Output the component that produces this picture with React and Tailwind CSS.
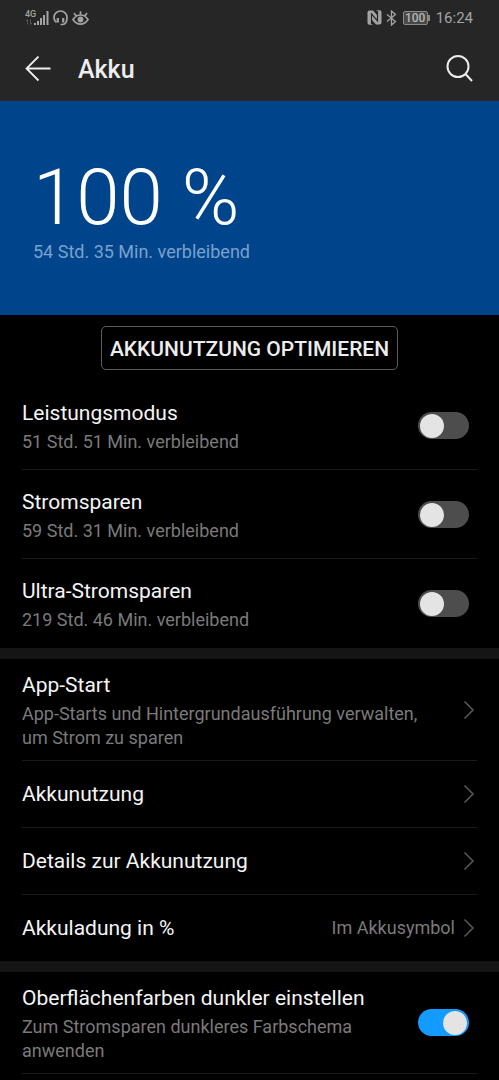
import { useState } from 'react';

const RULE = 'border-[#1a1a1a]';

function Chevron() {
  return (
    <svg className="h-5 w-3 shrink-0" viewBox="0 0 12 20" fill="none" stroke="#565656" strokeWidth="1.6" aria-hidden="true">
      <path d="M1.5 1.500 10 10l-8.500 8.500" />
    </svg>
  );
}

function Summary({ title, detail }) {
  return (
    <span className="min-w-0 flex-1">
      <span className="block text-[21px] leading-8 text-[#f5f5f5]">{title}</span>
      {detail && <span className="mt-px block text-lg leading-6 text-[#7a7a7a]">{detail}</span>}
    </span>
  );
}

function ToggleRow({ title, detail, initial = false, last = false, compact = false }) {
  const [on, setOn] = useState(initial);
  return (
    <li className={`mx-[22px] border-b ${last ? 'border-transparent' : RULE}`}>
      <label className={`flex items-center gap-10 pr-2 ${compact ? 'py-[10px]' : 'pt-4 pb-[15px]'}`}>
        <Summary title={title} detail={detail} />
        <input
          type="checkbox"
          role="switch"
          checked={on}
          onChange={(e) => setOn(e.target.checked)}
          className="peer sr-only"
        />
        <span className="flex h-[27px] w-[51px] shrink-0 items-center rounded-full bg-[#4d4d4d] px-[2px] peer-checked:justify-end peer-checked:bg-[#149bff]">
          <span className="size-6 rounded-full bg-[#e4e4e4]" />
        </span>
      </label>
    </li>
  );
}

function LinkRow({ title, detail, value, last = false }) {
  return (
    <li className={`mx-[22px] ${last ? '' : `border-b ${RULE}`}`}>
      <a href="#" className={`flex items-center pr-[2px] ${detail ? 'gap-8 py-[10px]' : 'gap-2 py-[17px]'}`}>
        <Summary title={title} detail={detail} />
        {value && <span className="text-lg leading-6 text-[#7a7a7a]">{value}</span>}
        <Chevron />
      </a>
    </li>
  );
}

function StatusBar() {
  return (
    <div className="flex h-[35px] items-center justify-between pr-[26px] pl-[25px] text-[#a3a3a3]">
      <div className="flex items-center gap-1">
        <div className="flex items-center">
          <div className="flex w-[9px] flex-col text-[9px] leading-[9px] font-medium">
            <span>4G</span>
            <svg className="h-[6px] w-2" viewBox="0 0 8 6" stroke="#555" fill="none" aria-hidden="true">
              <path d="M2.500 5.500v-5L1 2M5.500.5v5L7 4" />
            </svg>
          </div>
          <svg className="h-4 w-[15px]" viewBox="0 0 15 16" fill="currentColor" aria-hidden="true">
            <path d="M0 13h2v2H0zM3 11h2v4H3zM6 8h2v7H6zM9 5h2v10H9zM12.500 1h2v14h-2z" />
          </svg>
        </div>
        <svg className="h-4 w-[15px]" viewBox="0 0 15 16" fill="none" stroke="currentColor" strokeWidth="1.700" aria-hidden="true">
          <path d="M3.500 12.300C1.700 11.300 1 9.300 1 7.500a6.500 6.500 0 0 1 13 0c0 4-.9 7-4.500 7H7.500" />
          <path d="M4.800 8v4.500M10.200 8v4.500" strokeWidth="2.200" />
        </svg>
        <svg className="h-4 w-[17px]" viewBox="0 0 17 16" fill="none" stroke="currentColor" strokeWidth="1.700" aria-hidden="true">
          <path d="M1 9.500C3 6.500 5.500 5 8.500 5S14 6.500 16 9.500c-2 3.200-4.500 4.700-7.500 4.700S3 12.700 1 9.500ZM8.500 5V1.300M4.200 6 2 3M12.800 6 15 3" />
          <circle cx="8.500" cy="9.500" r="2.900" fill="currentColor" stroke="none" />
        </svg>
      </div>
      <div className="flex items-center">
        <svg className="h-[15px] w-[15px]" viewBox="0 0 15 15" aria-hidden="true">
          <path fill="currentColor" d="M2.500.5H6l4 4.500V1L9 .2h3.500c1.200 0 2 .8 2 2v10.300c0 1.200-.8 2-2 2H9L5 10v4l1 .8H2.500c-1.200 0-2-.8-2-2V2.500c0-1.200.8-2 2-2Z" />
          <path d="M4.500 14V3.800l6 7V1" fill="none" stroke="#262626" strokeWidth="1.200" />
        </svg>
        <svg className="ml-1 h-4 w-[11px]" viewBox="0 0 11 16" fill="none" stroke="currentColor" strokeWidth="1.300" aria-hidden="true">
          <path d="m1 4.500 8.500 7L5.500 15V1l4 3.500-8.500 7" />
        </svg>
        <span className="ml-[6px] flex h-[14px] w-[25px] items-center justify-center rounded-[2px] border border-[#8a8a8a] bg-[#484848] text-[12px] leading-3 font-medium text-[#b4b4b4]">
          100
        </span>
        <span className="h-[6px] w-[2px] bg-[#8a8a8a]" />
        <span className="ml-[6px] text-[15px] leading-5">16:24</span>
      </div>
    </div>
  );
}

export default function App() {
  return (
    <div className="min-h-screen bg-black pb-[6px] font-[Roboto,sans-serif]">
      <header className="bg-[#262626]">
        <StatusBar />
        <div className="flex h-[66px] items-center pt-[2px] pr-[26px] pl-[25px] text-[#ededed]">
          <button type="button" aria-label="Zurück">
            <svg className="block h-[26px] w-[26px]" viewBox="0 0 26 26" fill="none" stroke="currentColor" strokeWidth="1.800" aria-hidden="true">
              <path d="M25.500 12.500H1.500M13.500 .5 1.500 12.500l12 12" />
            </svg>
          </button>
          <h1 className="ml-[27px] flex-1 pt-px text-[25px] leading-8 font-medium">Akku</h1>
          <button type="button" aria-label="Suchen">
            <svg className="block h-7 w-7" viewBox="0 0 28 28" fill="none" stroke="currentColor" strokeWidth="2" aria-hidden="true">
              <circle cx="13" cy="11.500" r="10.500" />
              <path d="m20.500 19 6.500 7" />
            </svg>
          </button>
        </div>
      </header>

      <main>
        <section className="bg-[#00458c] px-[33px] pt-14 pb-[51px]">
          <p className="text-[78px] leading-[82px] font-light text-white">100 %</p>
          <p className="mt-px text-lg leading-6 text-[#7aa0cc]">54 Std. 35 Min. verbleibend</p>
        </section>

        <div className="flex justify-center py-[11px]">
          <button type="button" className="h-[44px] rounded-[5px] border border-[#5c5c5c] px-2 pt-[3px] text-[21px] font-medium text-[#ededed]">
            AKKUNUTZUNG OPTIMIEREN
          </button>
        </div>

        <ul>
          <ToggleRow title="Leistungsmodus" detail="51 Std. 51 Min. verbleibend" />
          <ToggleRow title="Stromsparen" detail="59 Std. 31 Min. verbleibend" />
          <ToggleRow title="Ultra-Stromsparen" detail="219 Std. 46 Min. verbleibend" last />
        </ul>

        <ul className="border-t-[11px] border-[#151515]">
          <LinkRow title="App-Start" detail="App-Starts und Hintergrundausführung verwalten, um Strom zu sparen" />
          <LinkRow title="Akkunutzung" />
          <LinkRow title="Details zur Akkunutzung" />
          <LinkRow title="Akkuladung in %" value="Im Akkusymbol" last />
        </ul>

        <ul className="border-t-[11px] border-[#151515]">
          <ToggleRow
            title="Oberflächenfarben dunkler einstellen"
            detail="Zum Stromsparen dunkleres Farbschema anwenden"
            initial
            compact
          />
        </ul>
      </main>
    </div>
  );
}
